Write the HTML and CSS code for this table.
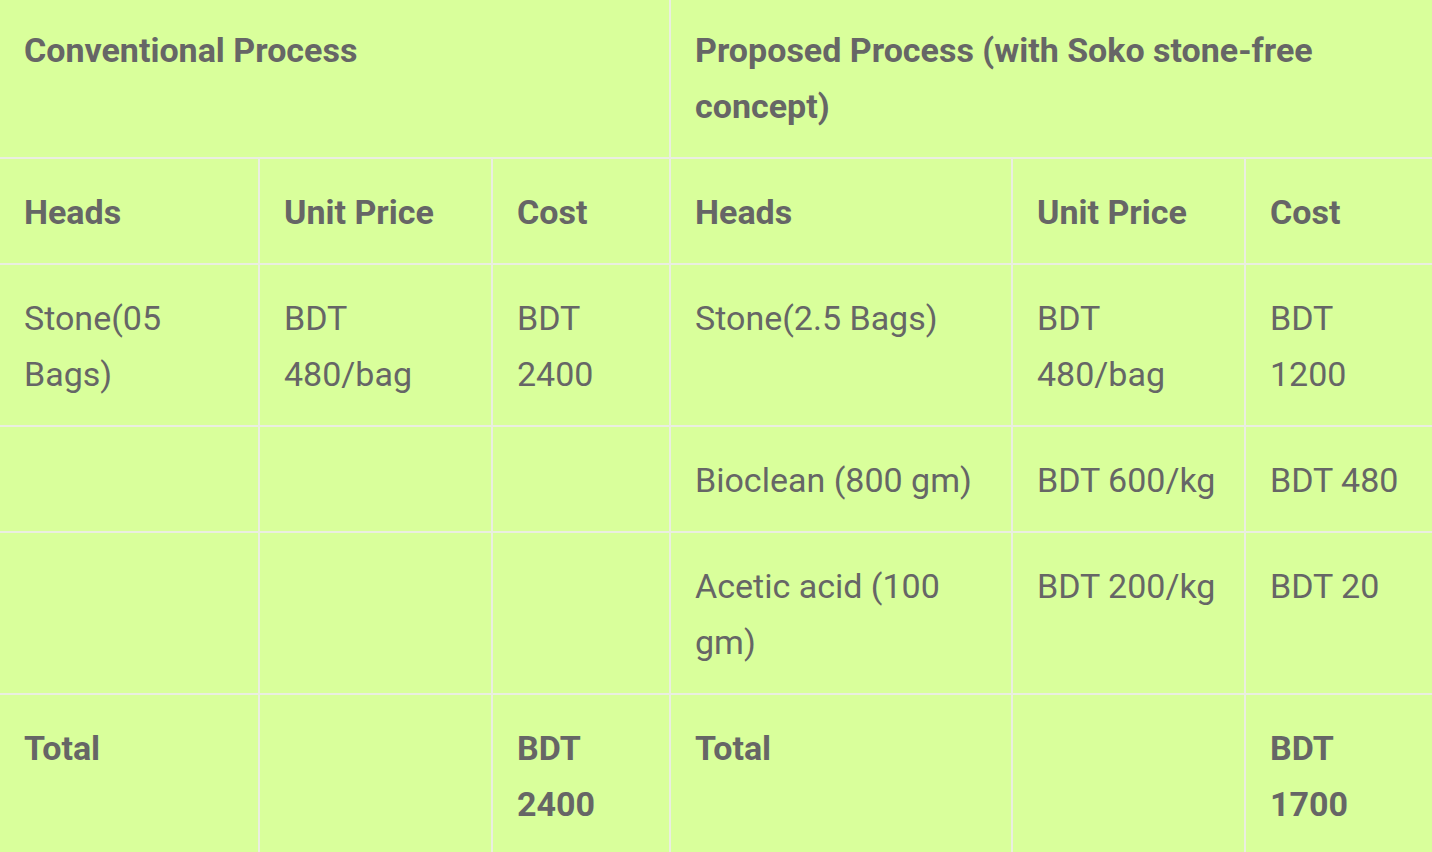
FILE: index.html
```html
<!DOCTYPE html>
<html lang="en">
<head>
<meta charset="utf-8">
<title>Cost comparison</title>
<link rel="stylesheet" href="styles.css">
</head>
<body>
<table class="cost-table">
  <colgroup>
    <col class="c1"><col class="c2"><col class="c3"><col class="c4"><col class="c5"><col class="c6">
  </colgroup>
  <tbody>
    <tr>
      <td colspan="3" class="strong">Conventional Process</td>
      <td colspan="3" class="strong">Proposed Process (with Soko stone-free concept)</td>
    </tr>
    <tr>
      <td class="strong">Heads</td>
      <td class="strong">Unit Price</td>
      <td class="strong">Cost</td>
      <td class="strong">Heads</td>
      <td class="strong">Unit Price</td>
      <td class="strong">Cost</td>
    </tr>
    <tr>
      <td>Stone(05 Bags)</td>
      <td>BDT 480/bag</td>
      <td>BDT 2400</td>
      <td>Stone(2.5 Bags)</td>
      <td>BDT 480/bag</td>
      <td>BDT 1200</td>
    </tr>
    <tr>
      <td></td>
      <td></td>
      <td></td>
      <td>Bioclean (800 gm)</td>
      <td>BDT 600/kg</td>
      <td>BDT 480</td>
    </tr>
    <tr>
      <td></td>
      <td></td>
      <td></td>
      <td>Acetic acid (100 gm)</td>
      <td>BDT 200/kg</td>
      <td>BDT 20</td>
    </tr>
    <tr>
      <td class="strong">Total</td>
      <td></td>
      <td class="strong">BDT 2400</td>
      <td class="strong">Total</td>
      <td></td>
      <td class="strong">BDT 1700</td>
    </tr>
  </tbody>
</table>
</body>
</html>
```
FILE: styles.css
```css
html, body {
  margin: 0;
  padding: 0;
  background: #d9ff9b;
  overflow: hidden;
}

.cost-table {
  width: 1432px;
  margin-top: -3px;
  border-collapse: collapse;
  table-layout: fixed;
  background: #d9ff9b;
  font-family: Roboto, "Liberation Sans", Arial, sans-serif;
  font-size: 34px;
  line-height: 56px;
  color: #666666;
}

.c1 { width: 259px; }
.c2 { width: 233px; }
.c3 { width: 178px; }
.c4 { width: 342px; }
.c5 { width: 233px; }
.c6 { width: 187px; }

.cost-table td {
  border: 2px solid #eaeee0;
  padding: 25px 24px 23px;
  vertical-align: top;
  text-align: left;
}

.cost-table tr:first-child td { border-top: none; }
.cost-table td:first-child { border-left: none; }
.cost-table td:last-child { border-right: none; }

.strong { font-weight: 700; }
```
